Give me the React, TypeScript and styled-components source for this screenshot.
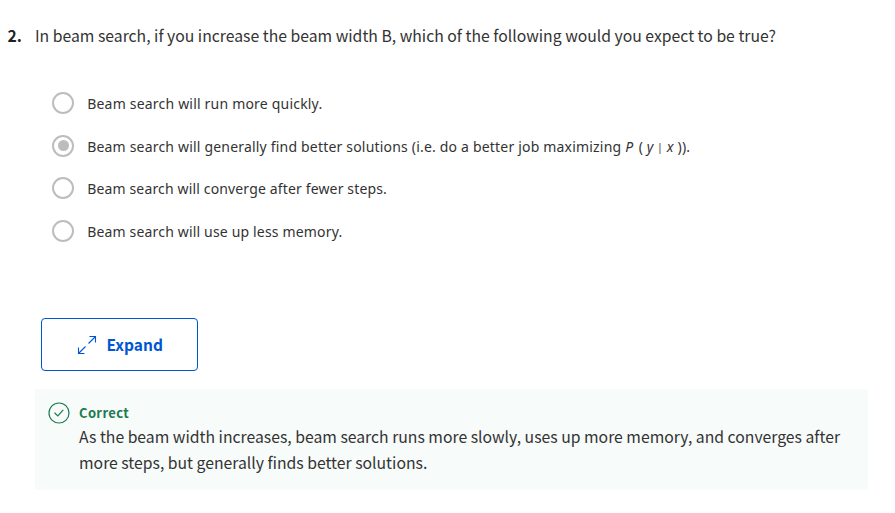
import React from 'react';
import styled, { createGlobalStyle } from 'styled-components';

const GlobalStyle = createGlobalStyle`
  * { box-sizing: border-box; }
  body {
    margin: 0;
    background: #fff;
    color: #333;
    font-family: "Noto Sans CJK SC", "Noto Sans", sans-serif;
  }
`;

const Page = styled.main`
  height: 513px;
  padding: 23px 28px 0 7.5px;
  overflow: hidden;
`;

const Question = styled.header`
  display: flex;
  height: 26px;
  font-size: 15.75px;
  line-height: 26px;
  white-space: nowrap;
`;

const QuestionNumber = styled.span`
  width: 27.5px;
  color: #1f1f1f;
  font-weight: 700;
`;

const Options = styled.div`
  display: flex;
  flex-direction: column;
  gap: 20.7px;
  margin: 43px 0 0 44.5px;
`;

const Option = styled.label`
  display: flex;
  align-items: center;
  height: 22px;
`;

const Radio = styled.span`
  display: grid;
  place-items: center;
  flex: none;
  width: 22px;
  height: 22px;
  border: 2px solid #bdbdbd;
  border-radius: 50%;
`;

const RadioDot = styled.span`
  width: 11px;
  height: 11px;
  border-radius: 50%;
  background: #bdbdbd;
`;

const OptionText = styled.span<{ $spacing: number }>`
  margin: 2px 0 0 13.2px;
  font-family: "Noto Sans", "Open Sans", sans-serif;
  font-size: 14px;
  line-height: 20px;
  letter-spacing: ${({ $spacing }) => $spacing}px;
  white-space: nowrap;
`;

const Probability = styled.span`
  em:first-child { margin-right: 1.5px; }
`;

const Divider = styled.span`
  margin-left: -0.5px;
  font-size: 10.5px;
  line-height: 1;
  vertical-align: 1px;
`;

const ExpandButton = styled.button`
  display: flex;
  align-items: center;
  width: 157px;
  height: 53px;
  margin: 76px 0 0 33.5px;
  padding: 0 0 2px 35px;
  gap: 9.5px;
  border: 1px solid #0056d2;
  border-radius: 4px;
  background: #fff;
  color: #0056d2;
  font: 700 15.5px/24px "Noto Sans CJK SC", sans-serif;
`;

const ExpandGlyph = styled.svg`
  flex: none;
  margin-top: 2px;
`;

const Feedback = styled.section`
  display: flex;
  width: 833px;
  height: 101px;
  margin: 18px 0 0 27.5px;
  padding: 13px 0 0 13px;
  gap: 9px;
  background: #f7fbfa;
`;

const FeedbackBody = styled.div`
  font-size: 15.75px;
  line-height: 26px;
  white-space: nowrap;
`;

const Verdict = styled.div`
  height: 22px;
  color: #1d7c50;
  font-size: 13px;
  font-weight: 700;
  line-height: 21px;
  letter-spacing: 0.35px;
`;

const ExpandIcon = () => (
  <ExpandGlyph width="20" height="20" viewBox="0 0 20 20" fill="none" stroke="currentColor" strokeWidth="1.1">
    <path d="M12.5 1.5H18.5V7.5M18.5 1.5L11.5 8.5M8.5 11.5L1.5 18.5M1.5 12.5V18.5H7.5" />
  </ExpandGlyph>
);

const CorrectIcon = () => (
  <svg width="22" height="22" viewBox="0 0 22 22" fill="none" stroke="#1d7c50" strokeWidth="1.2">
    <circle cx="11" cy="11" r="10" />
    <path d="M6.5 10.8L9.8 14L15.3 7.8" />
  </svg>
);

const options = [
  { content: 'Beam search will run more quickly.', checked: false, spacing: 0.2 },
  {
    content: (
      <>
        Beam search will generally find better solutions (i.e. do a better job maximizing{' '}
        <Probability><em>P</em> ( <em>y</em> <Divider>|</Divider> <em>x</em> )).</Probability>
      </>
    ),
    checked: true,
    spacing: 0.19,
  },
  { content: 'Beam search will converge after fewer steps.', checked: false, spacing: 0.15 },
  { content: 'Beam search will use up less memory.', checked: false, spacing: 0.17 },
];

export default function App() {
  return (
    <>
      <GlobalStyle />
      <Page>
        <Question>
          <QuestionNumber>2.</QuestionNumber>
          <span>In beam search, if you increase the beam width B, which of the following would you expect to be true?</span>
        </Question>
        <Options role="radiogroup">
          {options.map((option, index) => (
            <Option key={index}>
              <Radio role="radio" aria-checked={option.checked}>{option.checked && <RadioDot />}</Radio>
              <OptionText $spacing={option.spacing}>{option.content}</OptionText>
            </Option>
          ))}
        </Options>
        <ExpandButton><ExpandIcon />Expand</ExpandButton>
        <Feedback>
          <CorrectIcon />
          <FeedbackBody>
            <Verdict>Correct</Verdict>
            <div>As the beam width increases, beam search runs more slowly, uses up more memory, and converges after</div>
            <div>more steps, but generally finds better solutions.</div>
          </FeedbackBody>
        </Feedback>
      </Page>
    </>
  );
}
